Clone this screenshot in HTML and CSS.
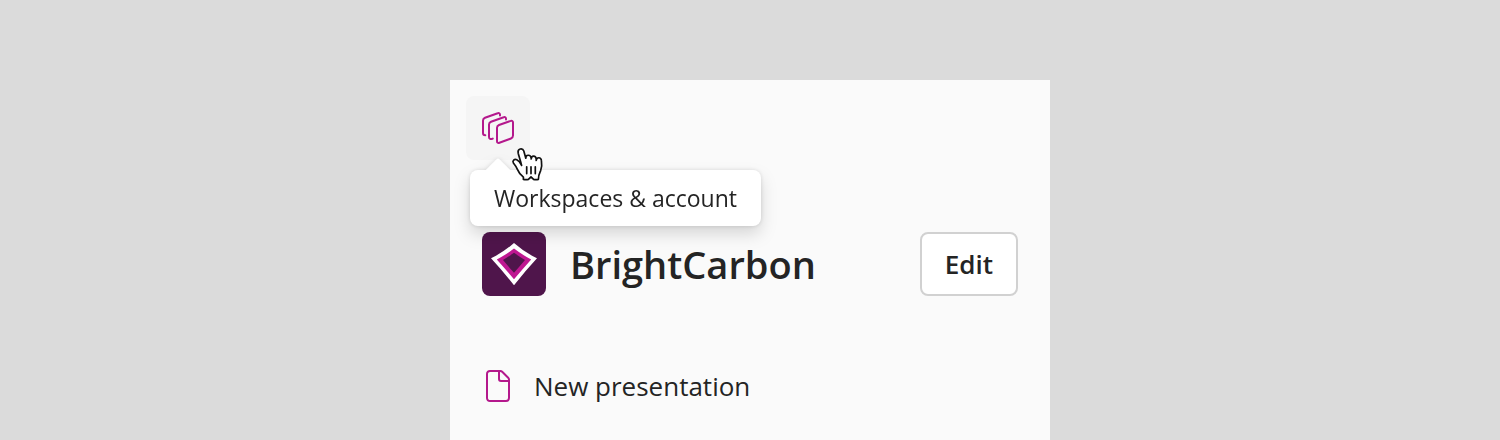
FILE: index.html
```
<!DOCTYPE html>
<html lang="en">
<head>
  <meta charset="UTF-8">
  <meta name="viewport" content="width=device-width, initial-scale=1.0">
  <title>BrightCarbon</title>
  <link rel="stylesheet" href="styles.css">
</head>
<body>
  <main class="panel">
    <!-- Toolbar -->
    <div class="toolbar">
      <button class="icon-button" type="button" aria-labelledby="workspacesTip">
        <svg width="32" height="32" viewBox="0 0 32 32" fill="none" stroke="#b4188c" stroke-width="2" stroke-linecap="round" stroke-linejoin="round">
          <path d="M18 3.5V2.8C18 1.4 17 .7 15.7 1.2L3 5.7C1.7 6.2 1 7 1 8.4V21C1 22.4 1.8 23.2 3.3 23.2"/>
          <path d="M24 7.4V6.8C24 5.4 23 4.7 21.7 5.2L9 9.7C7.7 10.2 7 11 7 12.4V25C7 27 8.6 27.6 10.8 26.6"/>
          <path d="M17 13L28.7 8.9C30 8.4 31 9.1 31 10.5V23.6C31 25 30.3 26 29 26.5L17.4 30.8C16 31.3 15 30.6 15 29.2V15.8C15 14.4 15.7 13.5 17 13Z"/>
        </svg>
      </button>
      <div class="tooltip" id="workspacesTip" role="tooltip">Workspaces &amp; account</div>
      <svg class="cursor" width="34" height="36" viewBox="0 0 34 36" fill="#fff" stroke="#111" stroke-width="1.7" stroke-linecap="round" stroke-linejoin="round">
        <path d="M11.6 19.4C10.8 15.6 9.2 11 8.2 7.2C7.2 2.4 12.6 1.4 13.8 5L15.8 12.2C15.6 8.6 20.6 8 21.2 12.2V13C21.4 9 25.8 9.2 26.2 13V14.4C26.8 10.8 31 11 31.4 14.4C32 18 31.8 21.4 30.6 24.8C29.4 27.4 28.2 29.4 28.4 33.4C26.8 33.8 25 33.8 23.6 33.4L21 30.8L18.4 33.4C16.8 33.8 15 33.8 13.4 33.4V31.2C10.6 29 8.6 26.4 7.4 23.4C6.4 20.8 5 19 3.4 17C2 14.6 4.4 12.8 6.8 13.8C9 14.8 10.4 17 11.6 19.4Z"/>
        <path d="M16.7 20.8V27.6M21 20.8V27.6M25.3 20.8V27.6"/>
      </svg>
    </div>

    <!-- Workspace -->
    <div class="workspace">
      <svg class="logo" width="64" height="64" viewBox="0 0 64 64">
        <rect width="64" height="64" rx="8" fill="#4f154b"/>
        <path fill="#fff" d="M32 11Q42.6 20.4 55 26.3Q43.2 39 32 53.3Q20.8 39 9 26.3Q21.4 20.4 32 11Z"/>
        <path fill="#bf1791" d="M32 16.6Q40.4 23 49.2 27.4Q40.8 36.8 32 47.2Q23.2 36.8 14.8 27.4Q23.6 23 32 16.6Z"/>
        <path fill="#4f154b" d="M32 20.8Q37.2 24.6 43 28Q37.6 34.4 32 40.8Q26.4 34.4 21 28Q26.8 24.6 32 20.8Z"/>
      </svg>
      <h1 class="workspace-name">BrightCarbon</h1>
      <button class="edit-button" type="button">Edit</button>
    </div>

    <!-- Actions -->
    <nav class="actions">
      <a class="action" href="#new">
        <svg width="24" height="32" viewBox="0 0 24 32" fill="none" stroke="#b4188c" stroke-width="2" stroke-linejoin="round">
          <path d="M4 1H14.2C15 1 15.7 1.3 16.2 1.8L22.2 7.8C22.7 8.3 23 9 23 9.8V28C23 29.8 21.8 31 20 31H4C2.2 31 1 29.8 1 28V4C1 2.2 2.2 1 4 1Z"/>
          <path d="M13 1V9C13 10.2 13.8 11 15 11H23"/>
        </svg>
        New presentation
      </a>
    </nav>
  </main>
</body>
</html>
```

FILE: styles.css
```
* {
  box-sizing: border-box;
}
body {
  margin: 0;
  min-height: 100vh;
  padding: 80px 16px 0;
  display: flex;
  justify-content: center;
  background-color: #dbdbdb;
  color: #242424;
  font-family: "Segoe UI", "Open Sans", "Noto Sans", sans-serif;
}
.panel {
  width: 100%;
  max-width: 600px;
  padding: 16px;
  background-color: #fafafa;
}
.toolbar {
  position: relative;
  display: flex;
}
.icon-button {
  display: flex;
  align-items: center;
  justify-content: center;
  width: 64px;
  height: 64px;
  padding: 0;
  border: none;
  border-radius: 8px;
  background-color: #f5f5f5;
  cursor: pointer;
}
.tooltip {
  position: absolute;
  top: 74px;
  left: 4px;
  padding: 12px 24px;
  border-radius: 8px;
  background-color: #fff;
  filter: drop-shadow(0 0 2px rgba(0, 0, 0, 0.12)) drop-shadow(0 8px 8px rgba(0, 0, 0, 0.14));
  font-size: 23px;
  line-height: 32px;
  white-space: nowrap;
}
/* Arrow pointing at the button */
.tooltip::before {
  content: "";
  position: absolute;
  top: -8px;
  left: 18px;
  width: 20px;
  height: 20px;
  border-radius: 2px;
  background-color: #fff;
  transform: rotate(45deg);
}
.cursor {
  position: absolute;
  top: 50px;
  left: 44px;
}
.workspace {
  display: flex;
  align-items: center;
  padding: 72px 16px 0;
}
.logo {
  flex: none;
}
.workspace-name {
  flex: 1;
  margin: 0 24px;
  font-size: 38px;
  font-weight: 600;
  line-height: 56px;
}
.edit-button {
  height: 64px;
  padding: 0 23px;
  border: 2px solid #d1d1d1;
  border-radius: 8px;
  background-color: #fff;
  color: inherit;
  font-family: inherit;
  font-size: 26px;
  font-weight: 600;
  cursor: pointer;
}
.actions {
  padding: 70px 20px 0;
}
.action {
  display: flex;
  align-items: center;
  gap: 24px;
  color: inherit;
  font-size: 26px;
  line-height: 40px;
  text-decoration: none;
}
```
